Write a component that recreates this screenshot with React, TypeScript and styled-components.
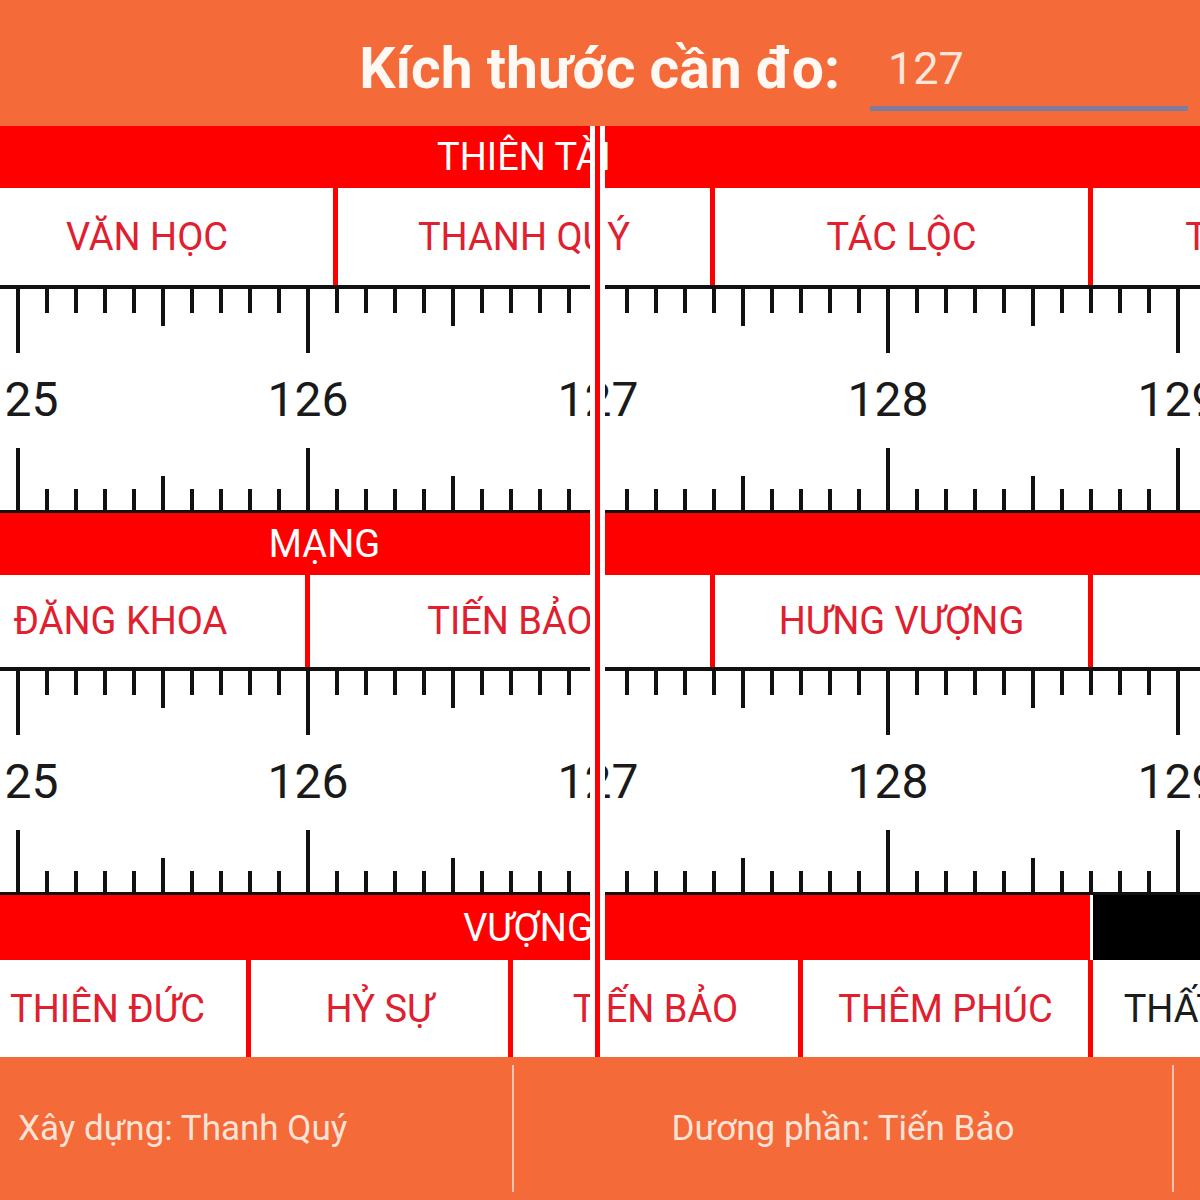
import React from "react";
import styled, { createGlobalStyle } from "styled-components";

const ORANGE = "#F46A39";
const RED = "#FF0000";
const TEXT_RED = "#E0202E";

// ruler scale: value 125 sits at x=18, one unit is 290px, ticks every 29px
const ORIGIN_X = 18;
const UNIT = 290;
const STEP = 29;
const FIRST_VALUE = 125;

const GlobalStyle = createGlobalStyle`
  html, body {
    margin: 0;
    padding: 0;
    background: #fff;
  }
  body {
    font-family: Roboto, "Noto Sans", "Liberation Sans", sans-serif;
  }
`;

const Screen = styled.div`
  width: 1200px;
  height: 1200px;
  display: flex;
  flex-direction: column;
  overflow: hidden;
  background: #fff;
`;

const Header = styled.header`
  flex: none;
  height: 126px;
  background: ${ORANGE};
  display: flex;
  align-items: flex-start;
  justify-content: flex-end;
  padding-right: 12px;
`;

const Title = styled.h1`
  margin: 36px 30px 0 0;
  font-size: 57px;
  line-height: 66px;
  font-weight: 700;
  color: #fff8f3;
  white-space: nowrap;
`;

const SizeInput = styled.input`
  margin-top: 30px;
  width: 318px;
  height: 81px;
  box-sizing: border-box;
  padding: 0 18px;
  border: none;
  border-bottom: 5px solid #7e7b9c;
  background: transparent;
  outline: none;
  font-family: Roboto, "Noto Sans", sans-serif;
  font-size: 45px;
  line-height: 76px;
  color: #fce6da;
`;

const Main = styled.main`
  position: relative;
  flex: none;
  height: 931px;
  display: flex;
  flex-direction: column;
`;

const BandRow = styled.div<{ $height: number; $offset: number }>`
  flex: none;
  height: ${({ $height }) => $height}px;
  margin-left: ${({ $offset }) => $offset}px;
  display: flex;
`;

const BandCell = styled.div<{ $width: number; $dark?: boolean; $gap?: number }>`
  flex: none;
  width: ${({ $width }) => $width}px;
  margin-left: ${({ $gap }) => $gap || 0}px;
  background: ${({ $dark }) => ($dark ? "#000" : RED)};
  color: #fff;
  display: flex;
  align-items: center;
  justify-content: center;
  font-size: 38px;
  white-space: nowrap;
`;

const SegmentRow = styled.div<{ $height: number; $offset: number }>`
  flex: none;
  height: ${({ $height }) => $height}px;
  margin-left: ${({ $offset }) => $offset}px;
  display: flex;
  background: #fff;
`;

const Segment = styled.div<{ $width: number; $dark?: boolean }>`
  flex: none;
  box-sizing: border-box;
  width: ${({ $width }) => $width}px;
  border-right: 5px solid ${RED};
  display: flex;
  align-items: center;
  justify-content: center;
  font-size: 38px;
  color: ${({ $dark }) => ($dark ? "#1c1c1c" : TEXT_RED)};
  white-space: nowrap;
`;

const RulerBody = styled.div`
  flex: none;
  height: 228px;
  display: flex;
  flex-direction: column;
  background: #fff;
`;

const TickSvg = styled.svg`
  display: block;
  flex: none;
`;

const NumberRow = styled.div`
  flex: none;
  height: 76px;
  box-sizing: border-box;
  padding-top: 10px;
  margin-left: ${ORIGIN_X - UNIT / 2}px;
  display: flex;
`;

const Number = styled.div`
  flex: none;
  width: ${UNIT}px;
  text-align: center;
  font-size: 48px;
  line-height: 66px;
  color: #1a1a1a;
`;

const Cursor = styled.div`
  position: absolute;
  top: 0;
  bottom: 0;
  left: 590px;
  width: 15px;
  display: flex;
  justify-content: center;
  background: #fff;

  &::after {
    content: "";
    width: 5px;
    background: ${RED};
  }
`;

const Footer = styled.footer`
  flex: none;
  height: 143px;
  background: ${ORANGE};
  display: flex;
  align-items: stretch;
`;

const FooterItem = styled.div<{ $width: number; $center?: boolean }>`
  flex: none;
  width: ${({ $width }) => $width}px;
  box-sizing: border-box;
  padding-left: ${({ $center }) => ($center ? 0 : 18)}px;
  display: flex;
  align-items: center;
  justify-content: ${({ $center }) => ($center ? "center" : "flex-start")};
  font-size: 35px;
  color: rgba(255, 240, 230, 0.92);
  white-space: nowrap;
`;

const FooterDivider = styled.div`
  flex: none;
  width: 2px;
  margin: 8px 0;
  background: rgba(255, 235, 225, 0.7);
`;

type Band = { label: string; width: number; dark?: boolean; gap?: number };
type Seg = { label: string; dark?: boolean };

const rows: {
  bandOffset: number;
  bandHeight: number;
  bands: Band[];
  segHeight: number;
  bounds: number[];
  segs: Seg[];
}[] = [
  {
    bandOffset: -420,
    bandHeight: 62,
    bands: [{ label: "THIÊN TÀI", width: 1888 }],
    segHeight: 97,
    bounds: [-42, 335, 712, 1090, 1468],
    segs: [
      { label: "VĂN HỌC" },
      { label: "THANH QUÝ" },
      { label: "TÁC LỘC" },
      { label: "THIÊN LỘC" },
    ],
  },
  {
    bandOffset: -441,
    bandHeight: 62,
    bands: [
      { label: "MẠNG", width: 1531 },
      { label: "TÀI", width: 1500 },
    ],
    segHeight: 92,
    bounds: [-67, 307, 712, 1090, 1468],
    segs: [
      { label: "ĐĂNG KHOA" },
      { label: "TIẾN BẢO" },
      { label: "HƯNG VƯỢNG" },
      { label: "TÀI ĐỨC" },
    ],
  },
  {
    bandOffset: -34,
    bandHeight: 65,
    bands: [
      { label: "VƯỢNG", width: 1124 },
      { label: "KHỔ", width: 1160, dark: true, gap: 3 },
    ],
    segHeight: 97,
    bounds: [-34, 248, 510, 800, 1090, 1380],
    segs: [
      { label: "THIÊN ĐỨC" },
      { label: "HỶ SỰ" },
      { label: "TIẾN BẢO" },
      { label: "THÊM PHÚC" },
      { label: "THẤT THOÁT", dark: true },
    ],
  },
];

const tickPositions = () => {
  const list: { x: number; kind: "major" | "mid" | "minor" }[] = [];
  for (let k = -1; ORIGIN_X + k * STEP < 1210; k++) {
    const m = ((k % 10) + 10) % 10;
    list.push({
      x: ORIGIN_X + k * STEP,
      kind: m === 0 ? "major" : m === 5 ? "mid" : "minor",
    });
  }
  return list;
};

const TopTicks = () => {
  const len = { major: 68, mid: 41, minor: 28 };
  return (
    <TickSvg width={1200} height={72} viewBox="0 0 1200 72">
      <rect x={0} y={0} width={1200} height={4} fill="#111" />
      {tickPositions().map((t) => (
        <rect key={t.x} x={t.x - 2} y={0} width={4} height={len[t.kind]} fill="#111" />
      ))}
    </TickSvg>
  );
};

const BottomTicks = () => {
  const from = { major: 15, mid: 43, minor: 56 };
  return (
    <TickSvg width={1200} height={80} viewBox="0 0 1200 80">
      <rect x={0} y={77} width={1200} height={3} fill="#111" />
      {tickPositions().map((t) => (
        <rect key={t.x} x={t.x - 2} y={from[t.kind]} width={4} height={80 - from[t.kind]} fill="#111" />
      ))}
    </TickSvg>
  );
};

const Ruler = () => (
  <RulerBody>
    <TopTicks />
    <NumberRow>
      {[0, 1, 2, 3, 4].map((i) => (
        <Number key={i}>{FIRST_VALUE + i}</Number>
      ))}
    </NumberRow>
    <BottomTicks />
  </RulerBody>
);

export default function App() {
  return (
    <>
      <GlobalStyle />
      <Screen>
        <Header>
          <Title>Kích thước cần đo:</Title>
          <SizeInput readOnly value="127" />
        </Header>
        <Main>
          {rows.map((row, i) => (
            <React.Fragment key={i}>
              <BandRow $height={row.bandHeight} $offset={row.bandOffset}>
                {row.bands.map((b) => (
                  <BandCell key={b.label} $width={b.width} $dark={b.dark} $gap={b.gap}>
                    {b.label}
                  </BandCell>
                ))}
              </BandRow>
              <SegmentRow $height={row.segHeight} $offset={row.bounds[0] + 3}>
                {row.segs.map((s, j) => (
                  <Segment
                    key={s.label + j}
                    $width={row.bounds[j + 1] - row.bounds[j]}
                    $dark={s.dark}
                  >
                    {s.label}
                  </Segment>
                ))}
              </SegmentRow>
              {i < rows.length - 1 && <Ruler />}
            </React.Fragment>
          ))}
          <Cursor />
        </Main>
        <Footer>
          <FooterItem $width={512}>Xây dựng: Thanh Quý</FooterItem>
          <FooterDivider />
          <FooterItem $width={658} $center>
            Dương phần: Tiến Bảo
          </FooterItem>
          <FooterDivider />
          <FooterItem $width={200} $center />
        </Footer>
      </Screen>
    </>
  );
}
